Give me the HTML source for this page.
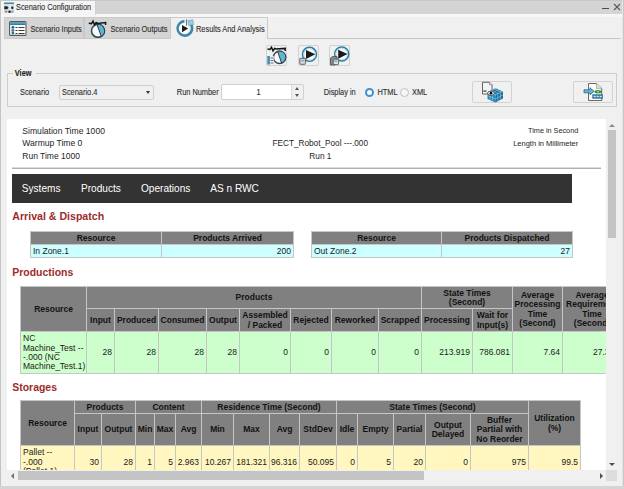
<!DOCTYPE html><html><head><meta charset="utf-8"><style>
*{box-sizing:border-box;margin:0;padding:0}
html,body{width:624px;height:489px;overflow:hidden;background:#f0f0f0;font-family:"Liberation Sans",sans-serif;color:#333}
.a{position:absolute}
.ui{font-size:7.35px;color:#2e2e2e;white-space:nowrap;line-height:1;-webkit-text-stroke:0.1px #333}
#tbar{left:0;top:0;width:624px;height:14px;background:#d4d4d4;border-top:1px solid #c8c8c8}
#tline{left:0;top:14px;width:624px;height:3px;background:#f7f7f7}
#ttab{left:1px;top:1px;width:95px;height:14px;background:#f4f4f4;border-right:1px solid #d0d0d0}
.tab{top:17px;height:22px;background:#d4d4d4;border:1px solid #c9c9c9}
.tab.act{top:17px;height:22px;background:#f0f0f0;border-bottom:none}
#content{left:7px;top:119px;width:599px;height:351px;background:#fff;overflow:hidden}
.btn{border:1px solid #d2d2d2;border-radius:2px;background:#f0f0f0}
.rep{font-size:8.5px;color:#1e1e1e;white-space:nowrap;line-height:1}
.h2{font-size:10.45px;font-weight:bold;color:#9c2b2b;white-space:nowrap;line-height:1}
.nav{font-size:10.1px;color:#fff;white-space:nowrap;line-height:1}
.c{position:absolute;border:1px solid #c6c6c6;display:flex;align-items:center;overflow:hidden;font-size:8.5px;line-height:9.4px;color:#1a1a1a;padding:1px 2px 0 2px}
.c.h{background:#808080;font-weight:bold;justify-content:center;text-align:center;color:#121212}
.c.r{justify-content:flex-end;text-align:right}
.c.l{justify-content:flex-start;text-align:left}
</style></head><body>
<div class="a" id="tbar"></div><div class="a" id="tline"></div><div class="a" id="ttab"></div>
<div class="a ui" style="left:16.00px;top:4.05px;font-size:7.4px;transform-origin:0 6.20px;transform:scaleY(1.12);">Scenario Configuration</div>
<div class="a" style="left:602px;top:8px;width:7px;height:1px;background:#4a4a4a"></div>
<svg class="a" style="left:613px;top:3px" width="8" height="8" viewBox="0 0 8 8"><path d="M1 1L7 7M7 1L1 7" stroke="#555" stroke-width="1.1"/></svg>
<div class="a tab" style="left:4px;width:80px"></div>
<div class="a tab" style="left:84px;width:87px"></div>
<div class="a" style="left:267px;top:38px;width:354px;height:1px;background:#c6c6c6"></div>
<div class="a tab act" style="left:170px;width:98px"></div>
<div class="a ui" style="left:30.40px;top:26.05px;font-size:7.4px;transform-origin:0 6.20px;transform:scaleY(1.12);">Scenario Inputs</div>
<div class="a ui" style="left:110.40px;top:26.05px;font-size:7.4px;transform-origin:0 6.20px;transform:scaleY(1.12);">Scenario Outputs</div>
<div class="a ui" style="left:196.00px;top:26.05px;font-size:7.4px;transform-origin:0 6.20px;transform:scaleY(1.12);">Results And Analysis</div>
<div class="a btn" style="left:266px;top:45px;width:21px;height:21px"></div>
<div class="a btn" style="left:298px;top:45px;width:21px;height:21px"></div>
<div class="a btn" style="left:329px;top:45px;width:21px;height:21px"></div>
<div class="a" style="left:7px;top:73px;width:610px;height:34px;border:1px solid #cdcdcd"></div>
<div class="a" style="left:13px;top:69px;width:23px;height:8px;background:#f0f0f0"></div>
<div class="a ui" style="left:14.80px;top:70.05px;font-size:7.4px;transform-origin:0 6.20px;transform:scaleY(1.12);font-weight:bold;color:#1e1e1e">View</div>
<div class="a ui" style="left:20.00px;top:89.05px;font-size:7.4px;transform-origin:0 6.20px;transform:scaleY(1.12);">Scenario</div>
<div class="a" style="left:59px;top:85px;width:95px;height:15px;border:1px solid #d0d0d0;border-radius:2px;background:#f0f0f0"></div>
<div class="a ui" style="left:62.00px;top:89.05px;font-size:7.4px;transform-origin:0 6.20px;transform:scaleY(1.12);">Scenario.4</div>
<div class="a" style="left:146px;top:91px;width:0;height:0;border-left:2.5px solid transparent;border-right:2.5px solid transparent;border-top:3px solid #333"></div>
<div class="a ui" style="left:176.80px;top:89.05px;font-size:7.4px;transform-origin:0 6.20px;transform:scaleY(1.12);">Run Number</div>
<div class="a" style="left:221px;top:84px;width:83px;height:16px;border:1px solid #d0d0d0;border-radius:2px;background:#fff"></div>
<div class="a" style="left:291px;top:85px;width:12px;height:14px;background:#f0f0f0;border-left:1px solid #d8d8d8"></div>
<div class="a ui" style="left:256.50px;top:89.05px;font-size:7.4px;transform-origin:0 6.20px;transform:scaleY(1.12);color:#1e1e1e">1</div>
<div class="a" style="left:295px;top:87px;width:0;height:0;border-left:2.5px solid transparent;border-right:2.5px solid transparent;border-bottom:3px solid #555"></div>
<div class="a" style="left:295px;top:94px;width:0;height:0;border-left:2.5px solid transparent;border-right:2.5px solid transparent;border-top:3px solid #555"></div>
<div class="a ui" style="left:323.70px;top:89.05px;font-size:7.4px;transform-origin:0 6.20px;transform:scaleY(1.12);">Display in</div>
<div class="a" style="left:364.5px;top:88px;width:9px;height:9px;border-radius:50%;border:2.4px solid #3a8fd6;background:#fff"></div>
<div class="a ui" style="left:377.50px;top:89.05px;font-size:7.4px;transform-origin:0 6.20px;transform:scaleY(1.12);">HTML</div>
<div class="a" style="left:399.5px;top:88px;width:9px;height:9px;border-radius:50%;border:1px solid #c0c0c0;background:#f6f6f6"></div>
<div class="a ui" style="left:412.00px;top:89.05px;font-size:7.4px;transform-origin:0 6.20px;transform:scaleY(1.12);">XML</div>
<div class="a btn" style="left:472px;top:81px;width:40px;height:22px"></div>
<div class="a btn" style="left:573px;top:81px;width:40px;height:22px"></div>
<svg class="a" style="left:4px;top:2px" width="11" height="12" viewBox="0 0 11 12"><rect x="0" y="0.5" width="10" height="1.6" fill="#3f8aa8"/><rect x="0" y="2.3" width="10" height="8.7" fill="#d3dde3"/><path d="M0.3 4.3 L3.2 4.3 L4.6 5.8 L3.2 7.3 L0.3 7.3 Z" fill="#222"/><rect x="5.3" y="2.5" width="1.3" height="8.5" fill="#f4f7f9"/><circle cx="8.3" cy="5.8" r="1.2" fill="#222"/><circle cx="5.6" cy="9.8" r="1.3" fill="#222"/><rect x="0.8" y="8.8" width="2.4" height="1.6" fill="#8a8a8a"/><rect x="7" y="8.5" width="2.5" height="2.2" fill="#9ab0bc"/></svg>
<svg class="a" style="left:9px;top:21px" width="18" height="15" viewBox="0 0 18 15"><rect x="0.6" y="0.6" width="16.4" height="13.8" rx="1" fill="#fdfdfd" stroke="#5a5a5a" stroke-width="1.1"/><rect x="1.1" y="1.1" width="15.4" height="2.9" fill="#4a9bbd"/><rect x="1.1" y="3.3" width="15.4" height="0.7" fill="#2f6f8f"/><circle cx="3.9" cy="6.3" r="1.5" fill="#2f6f8f"/><circle cx="3.9" cy="9.2" r="1.5" fill="#3f85a6"/><circle cx="3.9" cy="12" r="1.4" fill="#2f6f8f"/><path d="M6.5 6.5h2M9.5 6.5h6M6.5 9.5h2M9.5 9.5h6M6.5 12.5h2M9.5 12.5h6" stroke="#3a3a3a" stroke-width="1"/></svg>
<svg class="a" style="left:88px;top:19px" width="20" height="19" viewBox="0 0 20 19"><g transform="translate(0,1) scale(1.0)"><circle cx="10" cy="10.8" r="6.5" fill="#f2fafd" stroke="#33454d" stroke-width="1.5"/><path d="M8.9 4.4 A6.5 6.5 0 0 1 13.3 16.4 Z" fill="#63b3d3" stroke="#2a3c44" stroke-width="1"/><path d="M0.8 3.2 L3.5 3.6 L5 1.2 L6.6 5 L8.2 2.6 L9.6 3.4 L17.6 2.6 L17.6 5" fill="none" stroke="#141414" stroke-width="1.5"/></g></svg>
<svg class="a" style="left:175px;top:19px" width="20" height="19" viewBox="0 0 20 19"><path d="M14.2 3.6 A7.2 7.2 0 1 1 9.5 2.2" fill="none" stroke="#3d87a8" stroke-width="2.6"/><circle cx="9" cy="9.4" r="5.2" fill="#fafcfd"/><path d="M7 6 L13.2 9.6 L7 13.2 Z" fill="#1c1c1c"/><path d="M12.8 1.6 L17.8 0.8 L18.6 5.6 L13.6 6.4 Z" fill="#9fcbe0" stroke="#5f9fbd" stroke-width="0.6"/><path d="M11.5 0.3 V6.8" stroke="#3a3a3a" stroke-width="0.7"/></svg>
<svg class="a" style="left:266px;top:45px" width="21" height="21" viewBox="0 0 21 21"><circle cx="13.5" cy="12.4" r="6.1" fill="#f4fbfd" stroke="#34464e" stroke-width="1.4"/><path d="M11.6 6.3 A6.1 6.1 0 0 1 15.6 18.1 Z" fill="#63b3d3" stroke="#2a3c44" stroke-width="1"/><path d="M1.5 4 L4 4.4 L5.5 2.2 L7 5.8 L8.6 3.4 L10 4 L19.2 3.4 L19.2 6" fill="none" stroke="#141414" stroke-width="1.5"/><rect x="1.3" y="11" width="6.5" height="8.5" fill="#e9eef0"/><rect x="1.3" y="11" width="2.6" height="8.5" fill="#3f8fb0"/><path d="M4.5 13h3M4.5 15.5h3M4.5 18h3" stroke="#666" stroke-width="0.9"/></svg>
<svg class="a" style="left:298px;top:45px" width="21" height="21" viewBox="0 0 21 21"><circle cx="11.5" cy="9.3" r="7" fill="#f6fbfd" stroke="#2f7ba0" stroke-width="1.6"/><circle cx="11.5" cy="9.3" r="5.8" fill="none" stroke="#a6d6ec" stroke-width="0.9"/><path d="M8.0 5.1000000000000005 L17.3 9.3 L8.0 14.100000000000001 Z" fill="#1a1a1a"/><rect x="1.8" y="13.3" width="5.6" height="6" rx="0.6" fill="#d8dcde" stroke="#555" stroke-width="0.9"/><rect x="3" y="14.5" width="3.2" height="2.2" fill="#9fb7c2"/></svg>
<svg class="a" style="left:329px;top:45px" width="21" height="21" viewBox="0 0 21 21"><circle cx="12.7" cy="9" r="7" fill="#f6fbfd" stroke="#2f7ba0" stroke-width="1.6"/><circle cx="12.7" cy="9" r="5.8" fill="none" stroke="#a6d6ec" stroke-width="0.9"/><path d="M9.2 4.8 L18.5 9 L9.2 13.8 Z" fill="#1a1a1a"/><path d="M1.5 13 L3.5 11.5 L8 11.5 L8 18.5 L6 20 L1.5 20 Z" fill="#8a8a8a" stroke="#4a4a4a" stroke-width="0.8"/><rect x="4.3" y="14.2" width="5.2" height="5.4" rx="0.5" fill="#dfe4e6" stroke="#555" stroke-width="0.8"/><rect x="5.3" y="15.3" width="3" height="1.8" fill="#7fb5cc"/></svg>
<svg class="a" style="left:480px;top:81px" width="26" height="23" viewBox="0 0 26 23"><path d="M2.5 1.3 H9.5 L12 3.8 V13 H2.5 Z" fill="#f4f4f4" stroke="#555" stroke-width="0.9"/><path d="M9.5 1.3 V3.8 H12" fill="#ddd" stroke="#777" stroke-width="0.6"/><path d="M7.5 11.2 L15.3 7 L23 10.4 L15.3 14.6 Z" fill="#5fb4da"/><path d="M7.5 11.2 L15.3 14.6 L15.3 21.5 L7.5 18 Z" fill="#2a84b2"/><path d="M15.3 14.6 L23 10.4 L23 17.4 L15.3 21.5 Z" fill="#1d6c99"/><path d="M10 12.3 L17.8 8.1 M12.6 13.4 L20.4 9.2 M10 10 L17.8 13.5 M12.6 8.6 L20.4 12.1" stroke="#1c5a7a" stroke-width="0.7"/><path d="M10.1 12.4 V19.2 M12.7 13.5 V20.3 M17.9 13.3 V20.1 M20.5 11.9 V18.7 M7.5 14.6 L15.3 18 L23 13.9" fill="none" stroke="#8cd0ee" stroke-width="0.6"/><ellipse cx="11" cy="12.2" rx="3.3" ry="2.1" fill="#fff" stroke="#222" stroke-width="0.7"/><circle cx="11" cy="12.2" r="1.4" fill="#0a0a0a"/><rect x="3.3" y="9.3" width="3.2" height="1.6" fill="#666"/></svg>
<svg class="a" style="left:582px;top:82px" width="24" height="21" viewBox="0 0 24 21"><path d="M6.5 1.5 H14.5 L19.7 6.3 V18.5 H6.5 Z" fill="#fafafa" stroke="#5a5a5a" stroke-width="0.9"/><path d="M14.5 1.5 V6.3 H19.7" fill="#e4e4e4" stroke="#8a8a8a" stroke-width="0.6"/><path d="M2 7.8 H8 V5.8 L12 9.3 L8 12.8 V10.8 H2 Z" fill="#6ab3d6" stroke="#2c6a8a" stroke-width="0.8"/><ellipse cx="16" cy="9.7" rx="3.6" ry="1.7" fill="#1f9a2a"/><circle cx="16" cy="9.7" r="0.9" fill="#9ff0a0"/><rect x="10.3" y="12.3" width="10.6" height="4.4" fill="#2f6f99"/><path d="M11.6 14.5h2.2M14.6 14.5h2.2M17.6 14.5h2.2" stroke="#cfe3ef" stroke-width="1.3"/></svg>
<div class="a" id="content"></div>
<div class="a" id="cc" style="left:7px;top:119px;width:599px;height:351px;overflow:hidden">
<div class="a" style="left:-7px;top:-119px;width:624px;height:489px">
<div class="a rep" style="left:22.30px;top:126.75px;font-size:8.6px;">Simulation Time 1000</div>
<div class="a rep" style="left:22.30px;top:139.28px;font-size:8.55px;">Warmup Time 0</div>
<div class="a rep" style="left:22.30px;top:151.80px;font-size:8.5px;">Run Time 1000</div>
<div class="a rep" style="left:120.25px;width:400px;text-align:center;top:139.94px;font-size:8.22px;">FECT_Robot_Pool ---.000</div>
<div class="a rep" style="left:120.40px;width:400px;text-align:center;top:152.10px;font-size:8.3px;">Run 1</div>
<div class="a rep" style="right:45.80px;top:127.32px;font-size:7.26px;">Time in Second</div>
<div class="a rep" style="right:45.80px;top:139.80px;font-size:7.5px;">Length in Millimeter</div>
<div class="a" style="left:12px;top:167px;width:589px;height:1px;background:#dadada"></div><div class="a" style="left:12px;top:168px;width:589px;height:1px;background:#b0b0b0"></div>
<div class="a" style="left:12px;top:174px;width:559.5px;height:29px;background:#333333"></div>
<div class="a nav" style="left:21.80px;top:183.80px;font-size:10.1px;">Systems</div>
<div class="a nav" style="left:81.00px;top:183.80px;font-size:10.1px;">Products</div>
<div class="a nav" style="left:141.00px;top:183.80px;font-size:10.1px;">Operations</div>
<div class="a nav" style="left:210.30px;top:183.80px;font-size:10.1px;">AS n RWC</div>
<div class="a h2" style="left:12.30px;top:210.95px;font-size:10.6px;">Arrival &amp; Dispatch</div>
<div class="a h2" style="left:12.30px;top:268.02px;font-size:10.45px;">Productions</div>
<div class="a h2" style="left:12.30px;top:382.52px;font-size:10.45px;">Storages</div>
<div class="c h" style="left:30px;top:231px;width:132px;height:14px;"><div>Resource</div></div>
<div class="c h" style="left:161px;top:231px;width:133px;height:14px;"><div>Products Arrived</div></div>
<div class="c l" style="left:30px;top:244px;width:132px;height:14px;background:#ccffff;"><div>In Zone.1</div></div>
<div class="c r" style="left:161px;top:244px;width:133px;height:14px;background:#ccffff;"><div>200</div></div>
<div class="c h" style="left:311px;top:231px;width:131px;height:14px;"><div>Resource</div></div>
<div class="c h" style="left:441px;top:231px;width:132px;height:14px;"><div>Products Dispatched</div></div>
<div class="c l" style="left:311px;top:244px;width:131px;height:14px;background:#ccffff;"><div>Out Zone.2</div></div>
<div class="c r" style="left:441px;top:244px;width:132px;height:14px;background:#ccffff;"><div>27</div></div>
<div class="c h" style="left:20px;top:286px;width:67px;height:46px;"><div>Resource</div></div>
<div class="c h" style="left:86px;top:286px;width:336px;height:23px;"><div>Products</div></div>
<div class="c h" style="left:421px;top:286px;width:92px;height:23px;"><div>State Times<br>(Second)</div></div>
<div class="c h" style="left:512px;top:286px;width:51px;height:46px;"><div>Average<br>Processing<br>Time<br>(Second)</div></div>
<div class="c h" style="left:562px;top:286px;width:60px;height:46px;"><div>Average<br>Requirement<br>Time<br>(Second)</div></div>
<div class="c h" style="left:86px;top:308px;width:29px;height:24px;"><div>Input</div></div>
<div class="c h" style="left:114px;top:308px;width:45px;height:24px;"><div>Produced</div></div>
<div class="c h" style="left:158px;top:308px;width:49px;height:24px;"><div>Consumed</div></div>
<div class="c h" style="left:206px;top:308px;width:34px;height:24px;"><div>Output</div></div>
<div class="c h" style="left:239px;top:308px;width:52px;height:24px;"><div>Assembled<br>/ Packed</div></div>
<div class="c h" style="left:290px;top:308px;width:42px;height:24px;"><div>Rejected</div></div>
<div class="c h" style="left:331px;top:308px;width:48px;height:24px;"><div>Reworked</div></div>
<div class="c h" style="left:378px;top:308px;width:44px;height:24px;"><div>Scrapped</div></div>
<div class="c h" style="left:421px;top:308px;width:52px;height:24px;"><div>Processing</div></div>
<div class="c h" style="left:472px;top:308px;width:41px;height:24px;"><div>Wait for<br>Input(s)</div></div>
<div class="c l" style="left:20px;top:331px;width:67px;height:43px;background:#ccffcc;"><div>NC<br>Machine_Test --<br>-.000 (NC<br>Machine_Test.1)</div></div>
<div class="c r" style="left:86px;top:331px;width:29px;height:43px;background:#ccffcc;"><div>28</div></div>
<div class="c r" style="left:114px;top:331px;width:45px;height:43px;background:#ccffcc;"><div>28</div></div>
<div class="c r" style="left:158px;top:331px;width:49px;height:43px;background:#ccffcc;"><div>28</div></div>
<div class="c r" style="left:206px;top:331px;width:34px;height:43px;background:#ccffcc;"><div>28</div></div>
<div class="c r" style="left:239px;top:331px;width:52px;height:43px;background:#ccffcc;"><div>0</div></div>
<div class="c r" style="left:290px;top:331px;width:42px;height:43px;background:#ccffcc;"><div>0</div></div>
<div class="c r" style="left:331px;top:331px;width:48px;height:43px;background:#ccffcc;"><div>0</div></div>
<div class="c r" style="left:378px;top:331px;width:44px;height:43px;background:#ccffcc;"><div>0</div></div>
<div class="c r" style="left:421px;top:331px;width:52px;height:43px;background:#ccffcc;"><div>213.919</div></div>
<div class="c r" style="left:472px;top:331px;width:41px;height:43px;background:#ccffcc;"><div>786.081</div></div>
<div class="c r" style="left:512px;top:331px;width:51px;height:43px;background:#ccffcc;"><div>7.64</div></div>
<div class="c r" style="left:562px;top:331px;width:60px;height:43px;background:#ccffcc;"><div>27.333</div></div>
<div class="c h" style="left:20px;top:400px;width:55px;height:46px;"><div>Resource</div></div>
<div class="c h" style="left:74px;top:400px;width:62px;height:14px;"><div>Products</div></div>
<div class="c h" style="left:135px;top:400px;width:67px;height:14px;"><div>Content</div></div>
<div class="c h" style="left:201px;top:400px;width:136px;height:14px;"><div>Residence Time (Second)</div></div>
<div class="c h" style="left:336px;top:400px;width:193px;height:14px;"><div>State Times (Second)</div></div>
<div class="c h" style="left:528px;top:400px;width:53px;height:46px;"><div>Utilization<br>(%)</div></div>
<div class="c h" style="left:74px;top:413px;width:28px;height:33px;"><div>Input</div></div>
<div class="c h" style="left:101px;top:413px;width:35px;height:33px;"><div>Output</div></div>
<div class="c h" style="left:135px;top:413px;width:20px;height:33px;"><div>Min</div></div>
<div class="c h" style="left:154px;top:413px;width:22px;height:33px;"><div>Max</div></div>
<div class="c h" style="left:175px;top:413px;width:27px;height:33px;"><div>Avg</div></div>
<div class="c h" style="left:201px;top:413px;width:33px;height:33px;"><div>Min</div></div>
<div class="c h" style="left:233px;top:413px;width:37px;height:33px;"><div>Max</div></div>
<div class="c h" style="left:269px;top:413px;width:31px;height:33px;"><div>Avg</div></div>
<div class="c h" style="left:299px;top:413px;width:38px;height:33px;"><div>StdDev</div></div>
<div class="c h" style="left:336px;top:413px;width:22px;height:33px;"><div>Idle</div></div>
<div class="c h" style="left:357px;top:413px;width:37px;height:33px;"><div>Empty</div></div>
<div class="c h" style="left:393px;top:413px;width:33px;height:33px;"><div>Partial</div></div>
<div class="c h" style="left:425px;top:413px;width:46px;height:33px;"><div>Output<br>Delayed</div></div>
<div class="c h" style="left:470px;top:413px;width:59px;height:33px;"><div>Buffer<br>Partial with<br>No Reorder</div></div>
<div class="c l" style="left:20px;top:445px;width:55px;height:34px;background:#fff7bf;"><div>Pallet --<br>-.000<br>(Pallet.1)</div></div>
<div class="c r" style="left:74px;top:445px;width:28px;height:34px;background:#fff7bf;"><div>30</div></div>
<div class="c r" style="left:101px;top:445px;width:35px;height:34px;background:#fff7bf;"><div>28</div></div>
<div class="c r" style="left:135px;top:445px;width:20px;height:34px;background:#fff7bf;"><div>1</div></div>
<div class="c r" style="left:154px;top:445px;width:22px;height:34px;background:#fff7bf;"><div>5</div></div>
<div class="c r" style="left:175px;top:445px;width:27px;height:34px;background:#fff7bf;"><div>2.963</div></div>
<div class="c r" style="left:201px;top:445px;width:33px;height:34px;background:#fff7bf;"><div>10.267</div></div>
<div class="c r" style="left:233px;top:445px;width:37px;height:34px;background:#fff7bf;"><div>181.321</div></div>
<div class="c r" style="left:269px;top:445px;width:31px;height:34px;background:#fff7bf;"><div>96.316</div></div>
<div class="c r" style="left:299px;top:445px;width:38px;height:34px;background:#fff7bf;"><div>50.095</div></div>
<div class="c r" style="left:336px;top:445px;width:22px;height:34px;background:#fff7bf;"><div>0</div></div>
<div class="c r" style="left:357px;top:445px;width:37px;height:34px;background:#fff7bf;"><div>5</div></div>
<div class="c r" style="left:393px;top:445px;width:33px;height:34px;background:#fff7bf;"><div>20</div></div>
<div class="c r" style="left:425px;top:445px;width:46px;height:34px;background:#fff7bf;"><div>0</div></div>
<div class="c r" style="left:470px;top:445px;width:59px;height:34px;background:#fff7bf;"><div>975</div></div>
<div class="c r" style="left:528px;top:445px;width:53px;height:34px;background:#fff7bf;"><div>99.5</div></div>
</div></div>
<div class="a" style="left:606px;top:119px;width:11px;height:351px;background:#f0f0f0"></div>
<div class="a" style="left:608px;top:130px;width:8px;height:108px;background:#c4c4c4"></div>
<div class="a" style="left:7px;top:470px;width:599px;height:11px;background:#f0f0f0"></div>
<div class="a" style="left:18px;top:471px;width:406px;height:8.5px;background:#c4c4c4"></div>
<div class="a" style="left:606px;top:470px;width:11px;height:11px;background:#dcdcdc"></div>
<div class="a" style="left:609px;top:123.5px;width:0;height:0;border-left:3px solid transparent;border-right:3px solid transparent;border-bottom:3px solid #8a8a8a"></div>
<div class="a" style="left:609px;top:463px;width:0;height:0;border-left:3px solid transparent;border-right:3px solid transparent;border-top:3px solid #505050"></div>
<div class="a" style="left:10.5px;top:472.5px;width:0;height:0;border-top:3px solid transparent;border-bottom:3px solid transparent;border-right:3px solid #707070"></div>
<div class="a" style="left:600px;top:472.5px;width:0;height:0;border-top:3px solid transparent;border-bottom:3px solid transparent;border-left:3px solid #505050"></div>
<div class="a" style="left:0;top:0;width:1px;height:489px;background:#c4c4c4"></div>
<div class="a" style="left:622px;top:0;width:1px;height:489px;background:#e4e4e4"></div><div class="a" style="left:623px;top:0;width:1px;height:489px;background:#c8c8c8"></div>
<div class="a" style="left:0;top:486px;width:624px;height:3px;background:#d4d4d4"></div>
</body></html>
